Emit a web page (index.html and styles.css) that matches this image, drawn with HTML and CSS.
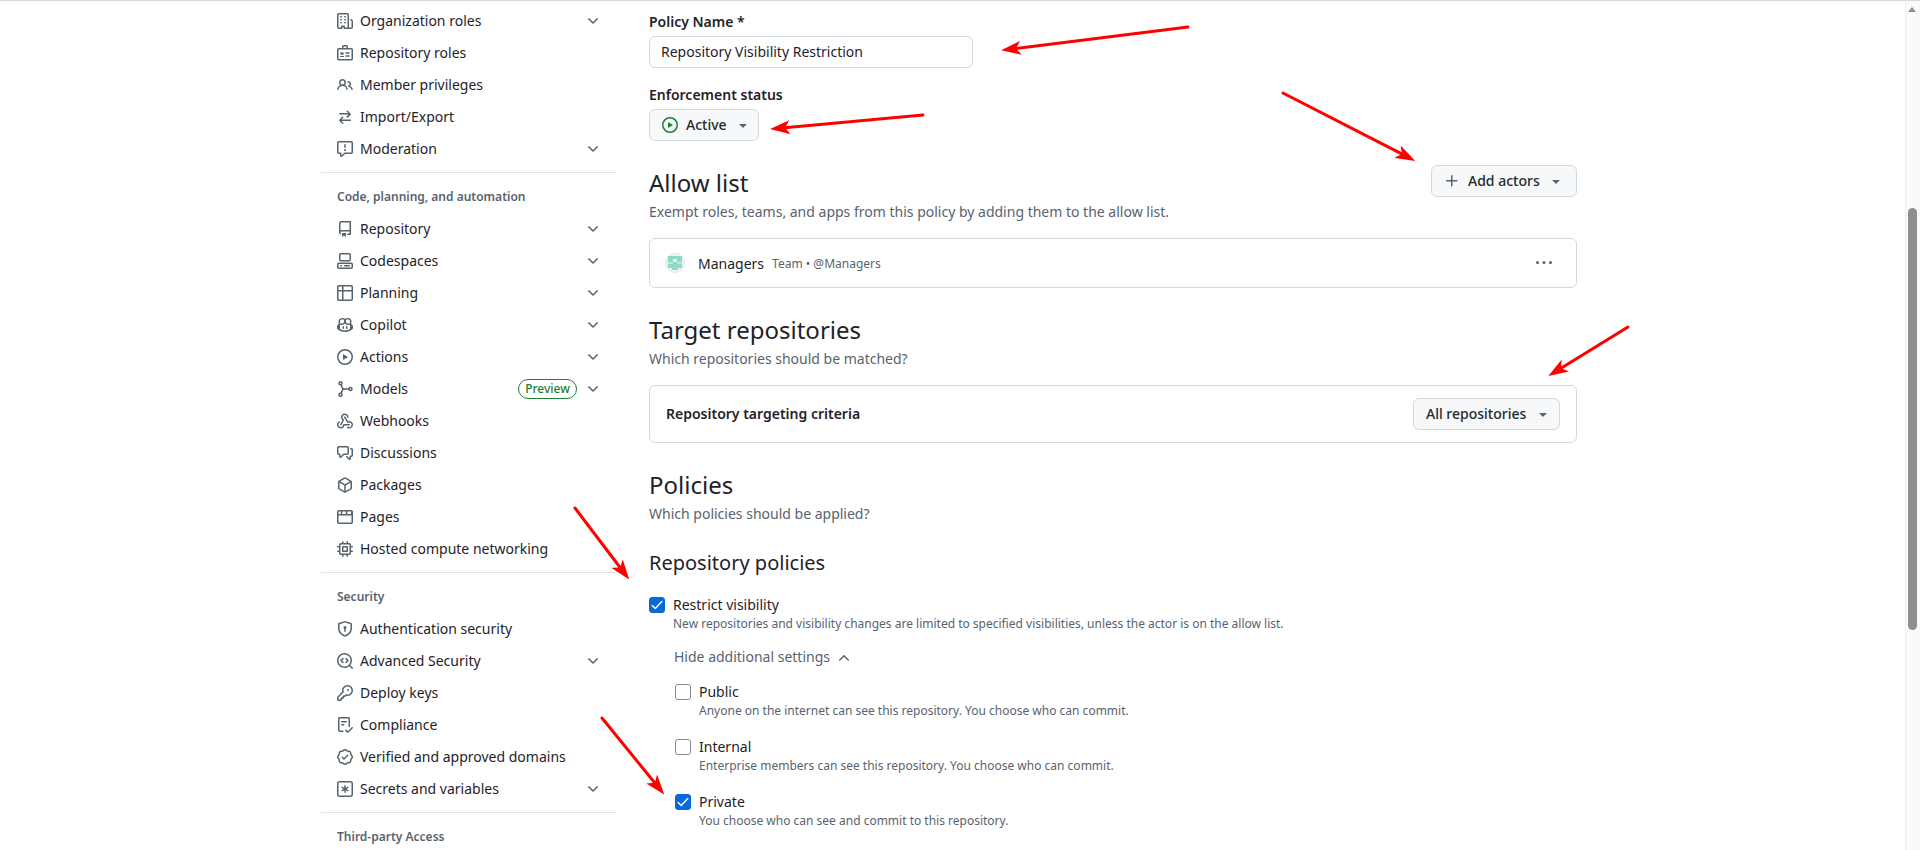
FILE: index.html
```html
<!DOCTYPE html>
<html lang="en">
<head>
  <meta charset="UTF-8">
  <title>Repository Visibility Restriction</title>
  <link rel="stylesheet" href="styles.css">
</head>
<body>
<svg class="sprites" width="0" height="0">
  <symbol id="i-org" viewBox="0 0 16 16"><path d="M1.75 16A1.75 1.75 0 0 1 0 14.25V1.75C0 .784.784 0 1.75 0h8.5C11.216 0 12 .784 12 1.75v12.5c0 .085-.006.168-.018.25h2.268a.25.25 0 0 0 .25-.25V8.285a.25.25 0 0 0-.111-.208l-1.055-.703a.749.749 0 1 1 .832-1.248l1.055.703c.487.325.779.871.779 1.456v5.965A1.75 1.75 0 0 1 14.25 16h-3.5a.766.766 0 0 1-.197-.026c-.099.017-.2.026-.303.026h-3a.75.75 0 0 1-.75-.75V14h-1v1.25a.75.75 0 0 1-.75.75Zm-.25-1.75c0 .138.112.25.25.25H4v-1.25a.75.75 0 0 1 .75-.75h2.5a.75.75 0 0 1 .75.75v1.25h2.25a.25.25 0 0 0 .25-.25V1.75a.25.25 0 0 0-.25-.25h-8.5a.25.25 0 0 0-.25.25ZM3.75 6h.5a.75.75 0 0 1 0 1.5h-.5a.75.75 0 0 1 0-1.5ZM3 3.75A.75.75 0 0 1 3.75 3h.5a.75.75 0 0 1 0 1.5h-.5A.75.75 0 0 1 3 3.75Zm4 3A.75.75 0 0 1 7.75 6h.5a.75.75 0 0 1 0 1.5h-.5A.75.75 0 0 1 7 6.75ZM7.75 3h.5a.75.75 0 0 1 0 1.5h-.5a.75.75 0 0 1 0-1.5ZM3 9.75A.75.75 0 0 1 3.75 9h.5a.75.75 0 0 1 0 1.5h-.5A.75.75 0 0 1 3 9.75ZM7.75 9h.5a.75.75 0 0 1 0 1.5h-.5a.75.75 0 0 1 0-1.5Z"/></symbol>
  <symbol id="i-badge" viewBox="0 0 16 16"><path fill="none" stroke="currentColor" stroke-width="1.5" stroke-linejoin="round" d="M1.75 3.75h12.5a1 1 0 0 1 1 1v9a1 1 0 0 1-1 1H1.75a1 1 0 0 1-1-1v-9a1 1 0 0 1 1-1ZM5.75 3.75v-2a1 1 0 0 1 1-1h2.5a1 1 0 0 1 1 1v2"/><path d="M3.5 7.25h3v2.5h-3ZM8.5 7.25h4v1.5h-4ZM8.5 10.25h4v1.5h-4ZM3 11h4v1H3Z"/></symbol>
  <symbol id="i-people" viewBox="0 0 16 16"><path d="M2 5.5a3.5 3.5 0 1 1 5.898 2.549 5.508 5.508 0 0 1 3.034 4.084.75.75 0 1 1-1.482.235 4 4 0 0 0-7.9 0 .75.75 0 0 1-1.482-.236A5.507 5.507 0 0 1 3.102 8.05 3.493 3.493 0 0 1 2 5.5ZM11 4a3.001 3.001 0 0 1 2.22 5.018 5.01 5.01 0 0 1 2.56 3.012.749.749 0 0 1-.885.954.752.752 0 0 1-.549-.514 3.507 3.507 0 0 0-2.522-2.372.75.75 0 0 1-.574-.73v-.352a.75.75 0 0 1 .416-.672A1.5 1.5 0 0 0 11 5.5.75.75 0 0 1 11 4Zm-5.5-.5a2 2 0 1 0-.001 3.999A2 2 0 0 0 5.5 3.5Z"/></symbol>
  <symbol id="i-switch" viewBox="0 0 16 16"><path d="M5.22 14.78a.75.75 0 0 0 1.06-1.06L4.56 12h8.69a.75.75 0 0 0 0-1.5H4.56l1.72-1.72a.75.75 0 0 0-1.06-1.06l-3 3a.75.75 0 0 0 0 1.06l3 3Zm5.56-6.5a.75.75 0 1 1-1.06-1.06l1.72-1.72H2.75a.75.75 0 0 1 0-1.5h8.69L9.72 2.78a.75.75 0 0 1 1.06-1.06l3 3a.75.75 0 0 1 0 1.06l-3 3Z"/></symbol>
  <symbol id="i-report" viewBox="0 0 16 16"><path d="M0 1.75C0 .784.784 0 1.75 0h12.5C15.216 0 16 .784 16 1.75v9.5A1.75 1.75 0 0 1 14.25 13H8.06l-2.573 2.573A1.458 1.458 0 0 1 3 14.543V13H1.75A1.75 1.75 0 0 1 0 11.25Zm1.75-.25a.25.25 0 0 0-.25.25v9.5c0 .138.112.25.25.25h2a.75.75 0 0 1 .75.75v2.19l2.72-2.72a.749.749 0 0 1 .53-.22h6.5a.25.25 0 0 0 .25-.25v-9.5a.25.25 0 0 0-.25-.25Zm7 2.25v2.5a.75.75 0 0 1-1.5 0v-2.5a.75.75 0 0 1 1.5 0ZM9 9a1 1 0 1 1-2 0 1 1 0 0 1 2 0Z"/></symbol>
  <symbol id="i-repo" viewBox="0 0 16 16"><path d="M2 2.5A2.5 2.5 0 0 1 4.5 0h8.75a.75.75 0 0 1 .75.75v12.5a.75.75 0 0 1-.75.75h-2.5a.75.75 0 0 1 0-1.5h1.75v-2h-8a1 1 0 0 0-.714 1.7.75.75 0 1 1-1.072 1.05A2.495 2.495 0 0 1 2 11.5Zm10.5-1h-8a1 1 0 0 0-1 1v6.708A2.486 2.486 0 0 1 4.5 9h8ZM5 12.25a.25.25 0 0 1 .25-.25h3.5a.25.25 0 0 1 .25.25v3.25a.25.25 0 0 1-.4.2l-1.45-1.087a.249.249 0 0 0-.3 0L5.4 15.7a.25.25 0 0 1-.4-.2Z"/></symbol>
  <symbol id="i-codespaces" viewBox="0 0 16 16"><path d="M0 11.25c0-.966.784-1.75 1.75-1.75h12.5c.966 0 1.75.784 1.75 1.75v3A1.75 1.75 0 0 1 14.25 16H1.75A1.75 1.75 0 0 1 0 14.25Zm2-9.5C2 .784 2.784 0 3.75 0h8.5C13.216 0 14 .784 14 1.75v5a1.75 1.75 0 0 1-1.75 1.75h-8.5A1.75 1.75 0 0 1 2 6.75Zm1.75-.25a.25.25 0 0 0-.25.25v5c0 .138.112.25.25.25h8.5a.25.25 0 0 0 .25-.25v-5a.25.25 0 0 0-.25-.25Zm-2 9.5a.25.25 0 0 0-.25.25v3c0 .138.112.25.25.25h12.5a.25.25 0 0 0 .25-.25v-3a.25.25 0 0 0-.25-.25Z"/><path d="M7 12.75a.75.75 0 0 1 .75-.75h4.5a.75.75 0 0 1 0 1.5h-4.5a.75.75 0 0 1-.75-.75Zm-4 0a.75.75 0 0 1 .75-.75h.5a.75.75 0 0 1 0 1.5h-.5a.75.75 0 0 1-.75-.75Z"/></symbol>
  <symbol id="i-table" viewBox="0 0 16 16"><path d="M0 1.75C0 .784.784 0 1.75 0h12.5C15.216 0 16 .784 16 1.75v12.5A1.75 1.75 0 0 1 14.25 16H1.75A1.75 1.75 0 0 1 0 14.25ZM6.5 6.5v8h7.75a.25.25 0 0 0 .25-.25V6.5Zm8-1.5V1.75a.25.25 0 0 0-.25-.25H6.5V5Zm-13 1.5v7.75c0 .138.112.25.25.25H5v-8ZM5 5V1.5H1.75a.25.25 0 0 0-.25.25V5Z"/></symbol>
  <symbol id="i-copilot" viewBox="0 0 16 16"><path d="M7.998 15.035c-4.562 0-7.873-2.914-7.998-3.749V9.338c.085-.628.677-1.686 1.588-2.065.013-.07.024-.143.036-.218.029-.183.06-.384.126-.612-.201-.508-.254-1.084-.254-1.656 0-.87.128-1.769.693-2.484.579-.733 1.494-1.124 2.724-1.261 1.206-.134 2.262.034 2.944.765.05.053.096.108.139.165.044-.057.094-.112.143-.165.682-.731 1.738-.899 2.944-.765 1.23.137 2.145.528 2.724 1.261.566.715.693 1.614.693 2.484 0 .572-.053 1.148-.254 1.656.066.228.098.429.126.612.012.076.024.148.037.218.924.385 1.522 1.471 1.591 2.095v1.872c0 .766-3.351 3.795-8.002 3.795Zm0-1.485c2.28 0 4.584-1.11 5.002-1.433V7.862l-.023-.116c-.49.21-1.075.291-1.727.291-1.146 0-2.059-.327-2.71-.991A3.222 3.222 0 0 1 8 6.303a3.24 3.24 0 0 1-.544.743c-.65.664-1.563.991-2.71.991-.652 0-1.236-.081-1.727-.291l-.023.116v4.255c.419.323 2.722 1.433 5.002 1.433ZM6.762 2.83c-.193-.206-.637-.413-1.682-.297-1.019.113-1.479.404-1.713.7-.247.312-.369.789-.369 1.554 0 .793.129 1.171.308 1.371.162.181.519.379 1.442.379.853 0 1.339-.235 1.638-.54.315-.322.527-.827.617-1.553.117-.935-.037-1.395-.241-1.614Zm4.155-.297c-1.044-.116-1.488.091-1.681.297-.204.219-.359.679-.242 1.614.091.726.303 1.231.618 1.553.299.305.784.54 1.638.54.922 0 1.28-.198 1.442-.379.179-.2.308-.578.308-1.371 0-.765-.123-1.242-.37-1.554-.233-.296-.693-.587-1.713-.7Z"/><path d="M6.25 9.037a.75.75 0 0 1 .75.75v1.501a.75.75 0 0 1-1.5 0V9.787a.75.75 0 0 1 .75-.75Zm4.25.75v1.501a.75.75 0 0 1-1.5 0V9.787a.75.75 0 0 1 1.5 0Z"/></symbol>
  <symbol id="i-play" viewBox="0 0 16 16"><path d="M8 0a8 8 0 1 1 0 16A8 8 0 0 1 8 0ZM1.5 8a6.5 6.5 0 1 0 13 0 6.5 6.5 0 0 0-13 0Zm4.879-2.773 4.264 2.559a.25.25 0 0 1 0 .428l-4.264 2.559A.25.25 0 0 1 6 10.559V5.442a.25.25 0 0 1 .379-.215Z"/></symbol>
  <symbol id="i-model" viewBox="0 0 16 16"><g fill="none" stroke="currentColor" stroke-width="1.5"><circle cx="3.5" cy="2.25" r="1.5"/><circle cx="3.5" cy="13.75" r="1.5"/><circle cx="13.5" cy="8" r="1.5"/><path d="M4.2 3.6C5 5.5 5 8 7 8c-2 0-2 2.5-2.8 4.4M7 8h5"/></g></symbol>
  <symbol id="i-webhook" viewBox="0 0 16 16"><path d="M5.5 4.25a2.25 2.25 0 0 1 4.5 0 .75.75 0 0 0 1.5 0 3.75 3.75 0 1 0-6.14 2.889l-2.272 4.258a.75.75 0 0 0 1.324.706L7 7.25a.75.75 0 0 0-.309-1.015A2.25 2.25 0 0 1 5.5 4.25Z"/><path d="M7.364 3.607a.75.75 0 0 1 1.03.257l2.608 4.349a3.75 3.75 0 1 1-.628 6.785.75.75 0 0 1 .752-1.299 2.25 2.25 0 1 0-.033-3.88.75.75 0 0 1-1.03-.256L7.107 4.636a.75.75 0 0 1 .257-1.03Z"/><path d="M2.9 8.776A.75.75 0 0 1 2.625 9.8 2.25 2.25 0 1 0 6 11.75a.75.75 0 0 1 .75-.751h5.5a.75.75 0 0 1 0 1.5H7.425a3.751 3.751 0 1 1-5.55-3.998.75.75 0 0 1 1.024.274Z"/></symbol>
  <symbol id="i-discuss" viewBox="0 0 16 16"><path d="M1.75 1h8.5c.966 0 1.75.784 1.75 1.75v5.5A1.75 1.75 0 0 1 10.25 10H7.061l-2.574 2.573A1.458 1.458 0 0 1 2 11.543V10h-.25A1.75 1.75 0 0 1 0 8.25v-5.5C0 1.784.784 1 1.75 1ZM1.5 2.75v5.5c0 .138.112.25.25.25h1a.75.75 0 0 1 .75.75v2.19l2.72-2.72a.749.749 0 0 1 .53-.22h3.5a.25.25 0 0 0 .25-.25v-5.5a.25.25 0 0 0-.25-.25h-8.5a.25.25 0 0 0-.25.25Zm13 2a.25.25 0 0 0-.25-.25h-.5a.75.75 0 0 1 0-1.5h.5c.966 0 1.75.784 1.75 1.75v5.5A1.75 1.75 0 0 1 14.25 12H14v1.543a1.458 1.458 0 0 1-2.487 1.03L9.22 12.28a.749.749 0 0 1 .326-1.275.749.749 0 0 1 .734.215l2.22 2.22v-2.19a.75.75 0 0 1 .75-.75h1a.25.25 0 0 0 .25-.25Z"/></symbol>
  <symbol id="i-package" viewBox="0 0 16 16"><path d="m8.878.392 5.25 3.045c.54.314.872.89.872 1.514v6.098a1.75 1.75 0 0 1-.872 1.514l-5.25 3.045a1.75 1.75 0 0 1-1.756 0l-5.25-3.045A1.75 1.75 0 0 1 1 11.049V4.951c0-.624.332-1.201.872-1.514L7.122.392a1.75 1.75 0 0 1 1.756 0ZM7.875 1.69l-4.63 2.685L8 7.133l4.755-2.758-4.63-2.685a.248.248 0 0 0-.25 0ZM2.5 5.677v5.372c0 .09.047.171.125.216l4.625 2.683V8.432Zm6.25 8.271 4.625-2.683a.25.25 0 0 0 .125-.216V5.677L8.75 8.432Z"/></symbol>
  <symbol id="i-browser" viewBox="0 0 16 16"><path d="M0 2.75C0 1.784.784 1 1.75 1h12.5c.966 0 1.75.784 1.75 1.75v10.5A1.75 1.75 0 0 1 14.25 15H1.75A1.75 1.75 0 0 1 0 13.25ZM14.5 6.5h-13v6.75c0 .138.112.25.25.25h12.5a.25.25 0 0 0 .25-.25Zm-13-1.5h2.25V2.5H1.75a.25.25 0 0 0-.25.25Zm3.75 0h3.5V2.5h-3.5Zm5 0h3.75V2.75a.25.25 0 0 0-.25-.25h-3.5Z"/></symbol>
  <symbol id="i-cpu" viewBox="0 0 16 16"><path fill-rule="evenodd" d="M6.5.75a.75.75 0 0 0-1.5 0V2H3.75A1.75 1.75 0 0 0 2 3.75V5H.75a.75.75 0 0 0 0 1.5H2v3H.75a.75.75 0 0 0 0 1.5H2v1.25c0 .966.784 1.75 1.75 1.75H5v1.25a.75.75 0 0 0 1.5 0V14h3v1.25a.75.75 0 0 0 1.5 0V14h1.25A1.75 1.75 0 0 0 14 12.25V11h1.25a.75.75 0 0 0 0-1.5H14v-3h1.25a.75.75 0 0 0 0-1.5H14V3.75A1.75 1.75 0 0 0 12.25 2H11V.75a.75.75 0 0 0-1.5 0V2h-3Zm5.75 11.75h-8.5a.25.25 0 0 1-.25-.25v-8.5a.25.25 0 0 1 .25-.25h8.5a.25.25 0 0 1 .25.25v8.5a.25.25 0 0 1-.25.25ZM5.75 5h4.5a.75.75 0 0 1 .75.75v4.5a.75.75 0 0 1-.75.75h-4.5a.75.75 0 0 1-.75-.75v-4.5A.75.75 0 0 1 5.75 5Zm.75 4.5h3v-3h-3Z"/></symbol>
  <symbol id="i-shield" viewBox="0 0 16 16"><path d="M7.467.133a1.748 1.748 0 0 1 1.066 0l5.25 1.68A1.75 1.75 0 0 1 15 3.48V7c0 1.566-.32 3.182-1.303 4.682-.983 1.498-2.585 2.813-5.032 3.855a1.697 1.697 0 0 1-1.33 0c-2.447-1.042-4.049-2.357-5.032-3.855C1.32 10.182 1 8.566 1 7V3.48a1.75 1.75 0 0 1 1.217-1.667Zm.61 1.429a.25.25 0 0 0-.153 0l-5.25 1.68a.25.25 0 0 0-.174.238V7c0 1.358.275 2.666 1.057 3.86.784 1.194 2.121 2.34 4.366 3.297a.196.196 0 0 0 .154 0c2.245-.956 3.582-2.104 4.366-3.298C13.225 9.666 13.5 8.36 13.5 7V3.48a.251.251 0 0 0-.174-.237l-5.25-1.68ZM9.5 6.5c0 .536-.286 1.032-.75 1.3v2.45a.75.75 0 0 1-1.5 0V7.8A1.5 1.5 0 1 1 9.5 6.5Z"/></symbol>
  <symbol id="i-codescan" viewBox="0 0 16 16"><path d="M8.47 4.97a.75.75 0 0 0 0 1.06L9.94 7.5 8.47 8.97a.75.75 0 1 0 1.06 1.06l2-2a.75.75 0 0 0 0-1.06l-2-2a.75.75 0 0 0-1.06 0ZM6.53 6.03a.75.75 0 0 0-1.06-1.06l-2 2a.75.75 0 0 0 0 1.06l2 2a.75.75 0 1 0 1.06-1.06L5.06 7.5l1.47-1.47Z"/><path d="M12.246 13.307a7.501 7.501 0 1 1 1.06-1.06l2.474 2.473a.749.749 0 0 1-.326 1.275.749.749 0 0 1-.734-.215ZM1.5 7.5a6.002 6.002 0 0 0 3.608 5.504 6.002 6.002 0 0 0 6.486-1.117.748.748 0 0 1 .292-.293A6 6 0 1 0 1.5 7.5Z"/></symbol>
  <symbol id="i-key" viewBox="0 0 16 16"><path d="M10.5 0a5.499 5.499 0 1 1-1.288 10.848l-.932.932a.749.749 0 0 1-.53.22H7v.75a.749.749 0 0 1-.22.53l-.5.5a.749.749 0 0 1-.53.22H5v.75a.749.749 0 0 1-.22.53l-.5.5a.749.749 0 0 1-.53.22h-2A1.75 1.75 0 0 1 0 14.25v-2c0-.199.079-.389.22-.53l4.932-4.932A5.5 5.5 0 0 1 10.5 0Zm-4 5.5c-.001.431.069.86.205 1.269a.75.75 0 0 1-.181.768L1.5 12.56v1.69c0 .138.112.25.25.25h1.69l.06-.06v-1.19a.75.75 0 0 1 .75-.75h1.19l.06-.06v-1.19a.75.75 0 0 1 .75-.75h1.19l1.023-1.025a.75.75 0 0 1 .768-.18A4 4 0 1 0 6.5 5.5ZM11 6a1 1 0 1 1 0-2 1 1 0 0 1 0 2Z"/></symbol>
  <symbol id="i-checklist" viewBox="0 0 16 16"><path d="M2.5 1.75v11.5c0 .138.112.25.25.25h3.17a.75.75 0 0 1 0 1.5H2.75A1.75 1.75 0 0 1 1 13.25V1.75C1 .784 1.784 0 2.75 0h8.5C12.216 0 13 .784 13 1.75v7.736a.75.75 0 0 1-1.5 0V1.75a.25.25 0 0 0-.25-.25h-8.5a.25.25 0 0 0-.25.25Zm13.274 9.537v-.001l-4.557 4.45a.75.75 0 0 1-1.055-.008l-1.943-1.95a.75.75 0 0 1 1.062-1.058l1.419 1.425 4.026-3.932a.75.75 0 1 1 1.048 1.074ZM4.75 4h4.5a.75.75 0 0 1 0 1.5h-4.5a.75.75 0 0 1 0-1.5ZM4 7.75A.75.75 0 0 1 4.75 7h2a.75.75 0 0 1 0 1.5h-2A.75.75 0 0 1 4 7.75Z"/></symbol>
  <symbol id="i-verified" viewBox="0 0 16 16"><path d="m9.585.52.929.68c.153.112.331.186.518.215l1.138.175a2.678 2.678 0 0 1 2.24 2.24l.174 1.139c.029.187.103.365.215.518l.68.928a2.677 2.677 0 0 1 0 3.17l-.68.928a1.174 1.174 0 0 0-.215.518l-.175 1.138a2.678 2.678 0 0 1-2.241 2.241l-1.138.175a1.17 1.17 0 0 0-.518.215l-.928.68a2.677 2.677 0 0 1-3.17 0l-.928-.68a1.174 1.174 0 0 0-.518-.215L3.83 14.41a2.678 2.678 0 0 1-2.24-2.24l-.175-1.138a1.17 1.17 0 0 0-.215-.518l-.68-.928a2.677 2.677 0 0 1 0-3.17l.68-.928c.112-.153.186-.331.215-.518l.175-1.14a2.678 2.678 0 0 1 2.24-2.24l1.139-.175c.187-.029.365-.103.518-.215l.928-.68a2.677 2.677 0 0 1 3.17 0ZM7.303 1.728l-.927.68a2.67 2.67 0 0 1-1.18.489l-1.137.174a1.179 1.179 0 0 0-.987.987l-.174 1.136a2.677 2.677 0 0 1-.489 1.18l-.68.928a1.18 1.18 0 0 0 0 1.394l.68.927c.256.348.424.753.489 1.18l.174 1.137c.078.509.478.909.987.987l1.136.174a2.67 2.67 0 0 1 1.18.489l.928.68c.414.305.979.305 1.394 0l.927-.68a2.67 2.67 0 0 1 1.18-.489l1.137-.174a1.18 1.18 0 0 0 .987-.987l.174-1.136a2.67 2.67 0 0 1 .489-1.18l.68-.928a1.176 1.176 0 0 0 0-1.394l-.68-.927a2.686 2.686 0 0 1-.489-1.18l-.174-1.137a1.179 1.179 0 0 0-.987-.987l-1.136-.174a2.677 2.677 0 0 1-1.18-.489l-.928-.68a1.176 1.176 0 0 0-1.394 0ZM11.28 6.78l-3.75 3.75a.75.75 0 0 1-1.06 0L4.72 8.78a.751.751 0 0 1 .018-1.042.751.751 0 0 1 1.042-.018L7 8.94l3.22-3.22a.751.751 0 0 1 1.042.018.751.751 0 0 1 .018 1.042Z"/></symbol>
  <symbol id="i-asterisk" viewBox="0 0 16 16"><path d="M0 2.75A2.75 2.75 0 0 1 2.75 0h10.5A2.75 2.75 0 0 1 16 2.75v10.5A2.75 2.75 0 0 1 13.25 16H2.75A2.75 2.75 0 0 1 0 13.25Zm2.75-1.25c-.69 0-1.25.56-1.25 1.25v10.5c0 .69.56 1.25 1.25 1.25h10.5c.69 0 1.25-.56 1.25-1.25V2.75c0-.69-.56-1.25-1.25-1.25ZM8 4a.75.75 0 0 1 .75.75V6.7l1.69-.975a.75.75 0 0 1 .75 1.3L9.5 8l1.69.976a.75.75 0 0 1-.75 1.298L8.75 9.3v1.951a.75.75 0 0 1-1.5 0V9.299l-1.69.975a.75.75 0 0 1-.75-1.298L6.5 8l-1.69-.975a.75.75 0 0 1 .75-1.3l1.69.976V4.75A.75.75 0 0 1 8 4Z"/></symbol>
  <symbol id="i-down" viewBox="0 0 16 16"><path d="M12.78 5.22a.749.749 0 0 1 0 1.06l-4.25 4.25a.749.749 0 0 1-1.06 0L3.22 6.28a.749.749 0 1 1 1.06-1.06L8 8.939l3.72-3.719a.749.749 0 0 1 1.06 0Z"/></symbol>
  <symbol id="i-up" viewBox="0 0 16 16"><path d="M3.22 10.53a.749.749 0 0 1 0-1.06l4.25-4.25a.749.749 0 0 1 1.06 0l4.25 4.25a.749.749 0 1 1-1.06 1.06L8 6.811 4.28 10.53a.749.749 0 0 1-1.06 0Z"/></symbol>
  <symbol id="i-caret" viewBox="0 0 16 16"><path d="m4.427 7.427 3.396 3.396a.25.25 0 0 0 .354 0l3.396-3.396A.25.25 0 0 0 11.396 7H4.604a.25.25 0 0 0-.177.427Z"/></symbol>
  <symbol id="i-plus" viewBox="0 0 16 16"><path d="M7.75 2a.75.75 0 0 1 .75.75V7h4.25a.75.75 0 0 1 0 1.5H8.5v4.25a.75.75 0 0 1-1.5 0V8.5H2.75a.75.75 0 0 1 0-1.5H7V2.75A.75.75 0 0 1 7.75 2Z"/></symbol>
  <symbol id="i-kebab" viewBox="0 0 16 16"><path d="M8 9a1.5 1.5 0 1 0 0-3 1.5 1.5 0 0 0 0 3ZM1.5 9a1.5 1.5 0 1 0 0-3 1.5 1.5 0 0 0 0 3Zm13 0a1.5 1.5 0 1 0 0-3 1.5 1.5 0 0 0 0 3Z"/></symbol>
  <symbol id="i-check" viewBox="0 0 16 16"><path fill="none" stroke="#fff" stroke-width="1.6" stroke-linecap="round" stroke-linejoin="round" d="M2.5 8.5l3.5 3.5 7.5-8"/></symbol>
</svg>

<div class="layout">
  <nav class="sidebar">
    <a class="nav-item"><svg class="icon"><use href="#i-org"/></svg><span class="nav-label">Organization roles</span><svg class="icon chev"><use href="#i-down"/></svg></a>
    <a class="nav-item"><svg class="icon"><use href="#i-badge"/></svg><span class="nav-label">Repository roles</span></a>
    <a class="nav-item"><svg class="icon"><use href="#i-people"/></svg><span class="nav-label">Member privileges</span></a>
    <a class="nav-item"><svg class="icon"><use href="#i-switch"/></svg><span class="nav-label">Import/Export</span></a>
    <a class="nav-item"><svg class="icon"><use href="#i-report"/></svg><span class="nav-label">Moderation</span><svg class="icon chev"><use href="#i-down"/></svg></a>
    <hr class="nav-divider">
    <h3 class="nav-heading">Code, planning, and automation</h3>
    <a class="nav-item"><svg class="icon"><use href="#i-repo"/></svg><span class="nav-label">Repository</span><svg class="icon chev"><use href="#i-down"/></svg></a>
    <a class="nav-item"><svg class="icon"><use href="#i-codespaces"/></svg><span class="nav-label">Codespaces</span><svg class="icon chev"><use href="#i-down"/></svg></a>
    <a class="nav-item"><svg class="icon"><use href="#i-table"/></svg><span class="nav-label">Planning</span><svg class="icon chev"><use href="#i-down"/></svg></a>
    <a class="nav-item"><svg class="icon"><use href="#i-copilot"/></svg><span class="nav-label">Copilot</span><svg class="icon chev"><use href="#i-down"/></svg></a>
    <a class="nav-item"><svg class="icon"><use href="#i-play"/></svg><span class="nav-label">Actions</span><svg class="icon chev"><use href="#i-down"/></svg></a>
    <a class="nav-item"><svg class="icon"><use href="#i-model"/></svg><span class="nav-label">Models</span><span class="preview">Preview</span><svg class="icon chev"><use href="#i-down"/></svg></a>
    <a class="nav-item"><svg class="icon"><use href="#i-webhook"/></svg><span class="nav-label">Webhooks</span></a>
    <a class="nav-item"><svg class="icon"><use href="#i-discuss"/></svg><span class="nav-label">Discussions</span></a>
    <a class="nav-item"><svg class="icon"><use href="#i-package"/></svg><span class="nav-label">Packages</span></a>
    <a class="nav-item"><svg class="icon"><use href="#i-browser"/></svg><span class="nav-label">Pages</span></a>
    <a class="nav-item"><svg class="icon"><use href="#i-cpu"/></svg><span class="nav-label">Hosted compute networking</span></a>
    <hr class="nav-divider">
    <h3 class="nav-heading">Security</h3>
    <a class="nav-item"><svg class="icon"><use href="#i-shield"/></svg><span class="nav-label">Authentication security</span></a>
    <a class="nav-item"><svg class="icon"><use href="#i-codescan"/></svg><span class="nav-label">Advanced Security</span><svg class="icon chev"><use href="#i-down"/></svg></a>
    <a class="nav-item"><svg class="icon"><use href="#i-key"/></svg><span class="nav-label">Deploy keys</span></a>
    <a class="nav-item"><svg class="icon"><use href="#i-checklist"/></svg><span class="nav-label">Compliance</span></a>
    <a class="nav-item"><svg class="icon"><use href="#i-verified"/></svg><span class="nav-label">Verified and approved domains</span></a>
    <a class="nav-item"><svg class="icon"><use href="#i-asterisk"/></svg><span class="nav-label">Secrets and variables</span><svg class="icon chev"><use href="#i-down"/></svg></a>
    <hr class="nav-divider">
    <h3 class="nav-heading">Third-party Access</h3>
  </nav>

  <main class="content">
    <label class="field-label" for="policy-name">Policy Name *</label>
    <input class="text-input" id="policy-name" type="text" value="Repository Visibility Restriction">

    <div class="field-label status-label">Enforcement status</div>
    <button class="btn btn-status"><svg class="icon icon-green"><use href="#i-play"/></svg><span>Active</span><svg class="icon caret"><use href="#i-caret"/></svg></button>

    <div class="section-head allow-head">
      <div>
        <h2 class="section-title">Allow list</h2>
        <p class="section-sub">Exempt roles, teams, and apps from this policy by adding them to the allow list.</p>
      </div>
      <button class="btn btn-add"><svg class="icon"><use href="#i-plus"/></svg><span>Add actors</span><svg class="icon caret"><use href="#i-caret"/></svg></button>
    </div>

    <div class="card actor-card">
      <svg class="avatar" viewBox="0 0 20 20">
        <circle cx="10" cy="10" r="9.5" fill="#f1f3f3" stroke="#e2e5e7"/>
        <path fill="#8adcc9" fill-rule="evenodd" d="M3 3h14v12h-4v2H7v-2H3ZM8 6v3h4V6Z"/>
        <path fill="#f1f3f3" d="M3 9.500h5v1H3ZM12 9.500h5v1h-5Z"/>
      </svg>
      <span class="actor-name">Managers</span>
      <span class="actor-meta">Team • @Managers</span>
      <svg class="icon kebab"><use href="#i-kebab"/></svg>
    </div>

    <h2 class="section-title target-title">Target repositories</h2>
    <p class="section-sub">Which repositories should be matched?</p>

    <div class="card target-card">
      <strong class="target-label">Repository targeting criteria</strong>
      <button class="btn btn-all"><span>All repositories</span><svg class="icon caret"><use href="#i-caret"/></svg></button>
    </div>

    <h2 class="section-title policies-title">Policies</h2>
    <p class="section-sub">Which policies should be applied?</p>

    <h3 class="sub-title">Repository policies</h3>

    <div class="check-row">
      <span class="checkbox on"><svg class="check-mark"><use href="#i-check"/></svg></span>
      <div>
        <div class="check-label">Restrict visibility</div>
        <div class="check-desc">New repositories and visibility changes are limited to specified visibilities, unless the actor is on the allow list.</div>
      </div>
    </div>

    <div class="extra">
      <div class="toggle"><span class="toggle-text">Hide additional settings</span><svg class="icon"><use href="#i-up"/></svg></div>
      <div class="check-row">
        <span class="checkbox"></span>
        <div>
          <div class="check-label">Public</div>
          <div class="check-desc">Anyone on the internet can see this repository. You choose who can commit.</div>
        </div>
      </div>
      <div class="check-row">
        <span class="checkbox"></span>
        <div>
          <div class="check-label">Internal</div>
          <div class="check-desc">Enterprise members can see this repository. You choose who can commit.</div>
        </div>
      </div>
      <div class="check-row">
        <span class="checkbox on"><svg class="check-mark"><use href="#i-check"/></svg></span>
        <div>
          <div class="check-label">Private</div>
          <div class="check-desc">You choose who can see and commit to this repository.</div>
        </div>
      </div>
    </div>
  </main>
</div>

<!-- browser scrollbar -->
<div class="scrollbar">
  <span class="scroll-up"></span>
  <span class="scroll-thumb"></span>
</div>

<!-- red annotation arrows drawn on top of the screenshot -->
<svg class="arrows" width="1920" height="850" viewBox="0 0 1920 850">
  <defs>
    <marker id="arrowhead" markerUnits="userSpaceOnUse" viewBox="0 0 20 14" markerWidth="20" markerHeight="14" refX="8" refY="7" orient="auto">
      <path d="M20 7 0 0 5 7 0 14Z" fill="#f00"/>
    </marker>
  </defs>
  <g stroke="#f00" stroke-width="3" stroke-linecap="round">
    <line x1="1188" y1="27" x2="1013" y2="48.8" marker-end="url(#arrowhead)"/>
    <line x1="923" y1="115" x2="782" y2="128" marker-end="url(#arrowhead)"/>
    <line x1="1283" y1="93" x2="1404.6" y2="155.4" marker-end="url(#arrowhead)"/>
    <line x1="1628" y1="327" x2="1558.5" y2="369.8" marker-end="url(#arrowhead)"/>
    <line x1="575" y1="508" x2="622" y2="570" marker-end="url(#arrowhead)"/>
    <line x1="602" y1="718" x2="656.7" y2="785.2" marker-end="url(#arrowhead)"/>
  </g>
</svg>
</body>
</html>
```

FILE: styles.css
```css
* {
  box-sizing: border-box;
}

html, body {
  margin: 0;
  height: 850px;
  overflow: hidden;
}

body {
  position: relative;
  background: #fff;
  color: #1f2328;
  font-family: "Noto Sans", sans-serif;
  font-size: 14px;
  line-height: 20px;
  border-top: 1px solid #d1d9e0;
}

.sprites {
  position: absolute;
}

.icon {
  width: 16px;
  height: 16px;
  flex: none;
  fill: currentColor;
}

.layout {
  display: flex;
  padding-left: 321px;
}

/* sidebar */
.sidebar {
  width: 296px;
  flex: none;
  padding-top: 4px;
}

.nav-item {
  display: flex;
  align-items: center;
  height: 32px;
  padding: 0 16px;
  color: #59636e;
}

.nav-label {
  flex: 1;
  margin-left: 7px;
  color: #1f2328;
}

.preview {
  width: 59px;
  height: 20px;
  margin-right: 8px;
  border: 1px solid #1a7f37;
  border-radius: 10px;
  color: #1a7f37;
  font-size: 12px;
  font-weight: 500;
  line-height: 18px;
  text-align: center;
}

.nav-divider {
  height: 1px;
  margin: 7px 0 0;
  border: 0;
  background: #dfe4ea;
}

.nav-heading {
  margin: 0;
  padding: 14px 16px 6px;
  color: #59636e;
  font-size: 12px;
  font-weight: 600;
  line-height: 20px;
}

/* main column */
.content {
  width: 928px;
  flex: none;
  margin-left: 32px;
  padding-top: 11px;
}

.field-label {
  display: block;
  font-weight: 600;
}

.text-input {
  display: block;
  width: 324px;
  height: 32px;
  margin-top: 4px;
  padding: 0 11px 2px;
  border: 1px solid #d1d9e0;
  border-radius: 6px;
  color: #1f2328;
  font: 14px/20px "Noto Sans", sans-serif;
}

.status-label {
  margin-top: 17px;
  margin-bottom: 4px;
}

.btn {
  display: inline-flex;
  align-items: center;
  height: 32px;
  padding: 0 8px 0 12px;
  border: 1px solid #d1d9e0;
  border-radius: 6px;
  background: #f6f8fa;
  color: #25292e;
  font: 500 14px/20px "Noto Sans", sans-serif;
}

.btn .caret {
  margin-left: 8px;
  color: #59636e;
}

.btn-status {
  width: 110px;
  display: flex;
}

.btn-status > span {
  margin-left: 8px;
}

.icon-green {
  color: #1a7f37;
}

.section-head {
  display: flex;
  justify-content: space-between;
}

.allow-head {
  margin-top: 24px;
}

.btn-add {
  flex: none;
  width: 146px;
}

.btn-add .icon:first-child {
  color: #59636e;
}

.btn-add > span {
  margin-left: 8px;
}

.section-title {
  margin: 0;
  font-size: 24px;
  font-weight: 400;
  line-height: 30px;
}

.allow-head .section-title {
  margin-top: 3px;
}

.section-sub {
  margin: 4px 0 0;
  color: #59636e;
}

.card {
  display: flex;
  align-items: center;
  margin-top: 16px;
  border: 1px solid #d1d9e0;
  border-radius: 6px;
}

.actor-card {
  height: 50px;
  padding: 0 15px;
}

.avatar {
  width: 20px;
  height: 20px;
  flex: none;
}

.actor-name {
  margin-left: 13px;
  padding-top: 2px;
}

.actor-meta {
  flex: 1;
  margin-left: 8px;
  padding-top: 2px;
  color: #59636e;
  font-size: 12px;
}

.kebab {
  margin-right: 9px;
  color: #59636e;
}

.target-title {
  margin-top: 27px;
}

.target-card {
  justify-content: space-between;
  height: 58px;
  padding: 0 16px;
}

.target-label {
  font-weight: 600;
}

.btn-all {
  width: 147px;
  justify-content: space-between;
}

.policies-title {
  margin-top: 27px;
}

.sub-title {
  margin: 26px 0 21px;
  font-size: 20px;
  font-weight: 400;
  line-height: 26px;
}

/* checkbox rows */
.check-row {
  display: flex;
  gap: 8px;
  margin-bottom: 19px;
}

.checkbox {
  width: 16px;
  height: 16px;
  flex: none;
  border: 1px solid #818b98;
  border-radius: 3px;
  background: #fff;
}

.checkbox.on {
  border-color: #0969da;
  background: #0969da;
}

.check-mark {
  display: block;
  width: 14px;
  height: 14px;
}

.check-label {
  margin-top: -2px;
  line-height: 20px;
}

.check-desc {
  color: #59636e;
  font-size: 12px;
  line-height: 18px;
}

.extra {
  margin-top: -4px;
  padding-left: 26px;
}

.toggle {
  display: flex;
  align-items: center;
  gap: 6px;
  height: 20px;
  margin-bottom: 16px;
  margin-left: -1px;
  color: #59636e;
}

.toggle-text {
  padding-bottom: 2px;
}

/* overlays */
.scrollbar {
  position: absolute;
  top: -1px;
  right: 0;
  width: 15px;
  height: 850px;
  border-left: 1px solid #efefef;
  background: #fafafa;
}

.scroll-up {
  position: absolute;
  left: 2px;
  top: 7px;
  width: 0;
  height: 0;
  border: 4.5px solid transparent;
  border-top: 0;
  border-bottom: 5px solid #8f8f8f;
}

.scroll-thumb {
  position: absolute;
  left: 2px;
  top: 208px;
  width: 9px;
  height: 422px;
  border-radius: 5px;
  background: #8f8f8f;
}

.arrows {
  position: absolute;
  left: 0;
  top: -1px;
  pointer-events: none;
}
```
